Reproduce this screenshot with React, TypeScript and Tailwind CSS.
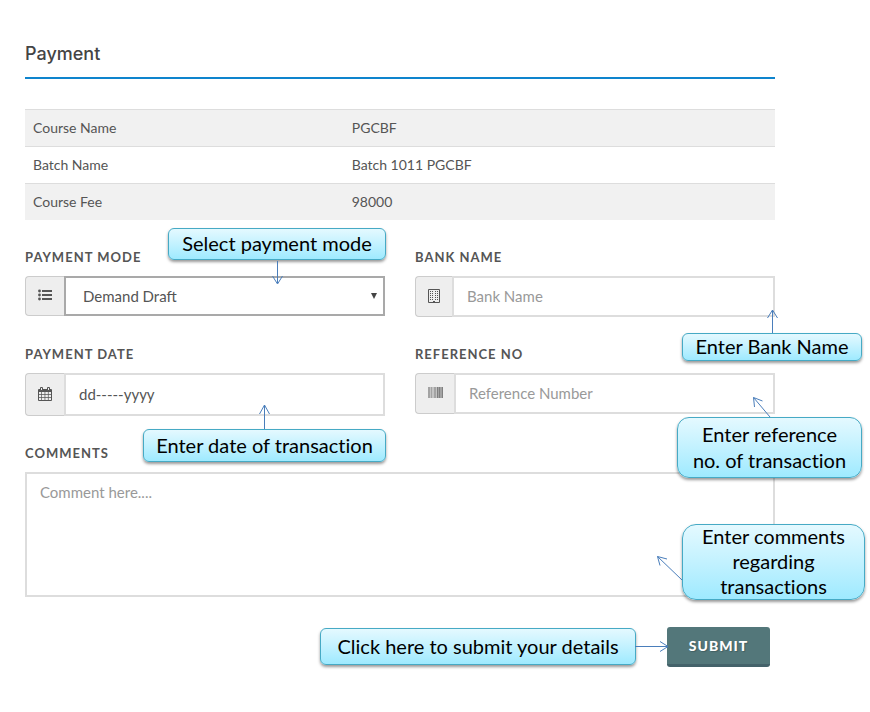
import type { ReactNode } from "react";

const courseRows = [
  { name: "Course Name", value: "PGCBF" },
  { name: "Batch Name", value: "Batch 1011 PGCBF" },
  { name: "Course Fee", value: "98000" },
];

const labelClass =
  "mb-[9px] block w-fit text-[13px] leading-5 font-bold tracking-[1px] text-[#555] uppercase";

const inputClass =
  "w-full min-w-0 flex-1 border-2 border-[#ddd] bg-white px-[13px] text-[15px] text-[#555] outline-none placeholder:text-[#999]";

function ListIcon() {
  return (
    <svg width="14" height="12" viewBox="0 0 14 12" fill="#555" aria-hidden="true">
      <circle cx="1.5" cy="2" r="1.4" />
      <circle cx="1.5" cy="6" r="1.4" />
      <circle cx="1.5" cy="10" r="1.4" />
      <rect x="4" y="1" width="10" height="2" />
      <rect x="4" y="5" width="10" height="2" />
      <rect x="4" y="9" width="10" height="2" />
    </svg>
  );
}

function BuildingIcon() {
  const rows = [2, 4, 6, 8, 10];
  const columns = [2, 4, 7, 9];
  return (
    <svg width="12" height="14" viewBox="0 0 12 14" fill="#555" aria-hidden="true">
      <path d="M0.5 0.5h11v13h-11z" fill="none" stroke="#555" />
      {rows.map((y) =>
        columns.map((x) => <rect key={`${x}-${y}`} x={x} y={y} width="1" height="1" />)
      )}
      <rect x="5" y="12" width="2" height="2" />
    </svg>
  );
}

function CalendarIcon() {
  return (
    <svg width="14" height="14" viewBox="0 0 14 14" aria-hidden="true">
      <path d="M1 2h12a1 1 0 0 1 1 1v10a1 1 0 0 1-1 1H1a1 1 0 0 1-1-1V3a1 1 0 0 1 1-1z" fill="#555" />
      <path d="M1 5h2.3v2.2H1zM4 5h2.6v2.2H4zM7.3 5h2.6v2.2H7.3zM10.6 5H13v2.2h-2.4zM1 8h2.3v2.2H1zM4 8h2.6v2.2H4zM7.3 8h2.6v2.2H7.3zM10.6 8H13v2.2h-2.4zM1 11h2.3v2H1zM4 11h2.6v2H4zM7.3 11h2.6v2H7.3zM10.6 11H13v2h-2.4z" fill="#eee" />
      <path d="M2.5 0.5h2v3h-2zM9.5 0.5h2v3h-2z" fill="#eee" stroke="#555" />
    </svg>
  );
}

function BarcodeIcon() {
  return (
    <svg width="15" height="11" viewBox="0 0 15 11" aria-hidden="true">
      <rect width="15" height="11" fill="#c4c4c4" />
      <path d="M0 0h2v11H0zM3 0h1v11H3zM6 0h2v11H6zM9 0h5v11H9z" fill="#a3a3a3" />
      <path d="M9 0h1v11H9zM11 0h1v11h-1zM14 0h1v11h-1z" fill="#808080" />
    </svg>
  );
}

function AddOn({ children, narrow = false }: { children: ReactNode; narrow?: boolean }) {
  return (
    <span
      className={`flex shrink-0 items-center justify-center rounded-l border border-r-0 border-[#ccc] bg-[#eee] pb-0.5 ${
        narrow ? "w-[37px]" : "w-[39px]"
      }`}
    >
      {children}
    </span>
  );
}

function Callout({ className, children }: { className: string; children: ReactNode }) {
  return (
    <div
      className={`absolute z-10 flex items-center justify-center border border-[#46aac5] bg-linear-to-b from-[#e4f9ff] to-[#9eeaff] pb-0.5 text-center text-[20px] whitespace-nowrap text-black shadow-[0_2px_3px_rgba(0,0,0,0.4)] [font-variant-ligatures:none] ${className}`}
    >
      {children}
    </div>
  );
}

/* Thin connector between a callout and its control. */
function Arrow({ className, width, height, d }: { className: string; width: number; height: number; d: string }) {
  return (
    <svg
      className={`pointer-events-none absolute z-20 ${className}`}
      width={width}
      height={height}
      viewBox={`0 0 ${width} ${height}`}
      fill="none"
      stroke="#4a7ebb"
      aria-hidden="true"
    >
      <path d={d} />
    </svg>
  );
}

export default function App() {
  return (
    <main className="bg-white pt-10 pr-[95px] pb-[45px] pl-[25px] font-['Lato',sans-serif] text-[#555]">
      <h1 className="border-b-2 border-[#0e84cd] pb-[9px] font-['Inter',sans-serif] text-lg leading-7 font-medium text-[#444]">
        Payment
      </h1>

      <table className="mt-[30px] w-full border-collapse text-left text-sm leading-5">
        <tbody>
          {courseRows.map((row) => (
            <tr key={row.name} className="border-t border-[#ddd] odd:bg-[#f1f1f1]">
              <th scope="row" className="w-[42.5%] p-2 font-normal">
                {row.name}
              </th>
              <td className="p-2">{row.value}</td>
            </tr>
          ))}
        </tbody>
      </table>

      <form className="mt-[27px]" onSubmit={(event) => event.preventDefault()}>
        <div className="grid grid-cols-2 gap-x-[30px] gap-y-[27px]">
          <div className="relative">
            <label htmlFor="mode" className={labelClass}>
              Payment Mode
            </label>
            <div className="relative flex h-10">
              <AddOn>
                <ListIcon />
              </AddOn>
              <select
                id="mode"
                className="w-full min-w-0 flex-1 appearance-none border-2 border-[#a9a9a9] bg-white px-[17px] text-[15px] text-[#555] outline-none"
              >
                <option>Demand Draft</option>
              </select>
              <svg
                className="pointer-events-none absolute top-[17px] right-2"
                width="6"
                height="6"
                viewBox="0 0 6 6"
                fill="#444"
                aria-hidden="true"
              >
                <path d="M0 0h6L3 6z" />
              </svg>
            </div>
            <Callout className="-top-[19px] right-[-1px] h-8 w-[218px] rounded-md">Select payment mode</Callout>
            <Arrow className="top-[14px] right-[102px]" width={11} height={24} d="M5.5 0V22M0.5 15L5.5 23L10.5 15" />
          </div>

          <div className="relative">
            <label htmlFor="bank" className={labelClass}>
              Bank Name
            </label>
            <div className="flex h-[41px]">
              <AddOn narrow>
                <BuildingIcon />
              </AddOn>
              <input id="bank" type="text" placeholder="Bank Name" className={inputClass} />
            </div>
            <Callout className="top-[86px] right-[-87px] h-7 w-[180px] rounded-md">Enter Bank Name</Callout>
            <Arrow className="top-[62px] right-[-3px]" width={11} height={24} d="M5.5 24V1M0.5 9L5.5 1L10.5 9" />
          </div>

          <div className="relative">
            <label htmlFor="date" className={labelClass}>
              Payment Date
            </label>
            <div className="flex h-[43px]">
              <AddOn>
                <CalendarIcon />
              </AddOn>
              <input id="date" type="text" defaultValue="dd-----yyyy" className={inputClass} />
            </div>
            <Callout className="top-[85px] right-[-1px] h-[33px] w-[243px] rounded-md">
              Enter date of transaction
            </Callout>
            <Arrow className="top-[60px] right-[115px]" width={11} height={25} d="M5.5 25V1M0.5 10L5.5 1L10.5 10" />
          </div>

          <div className="relative">
            <label htmlFor="reference" className={labelClass}>
              Reference No
            </label>
            <div className="flex h-[41px]">
              <AddOn>
                <BarcodeIcon />
              </AddOn>
              <input id="reference" type="text" placeholder="Reference Number" className={inputClass} />
            </div>
            <Callout className="top-[73px] right-[-87px] h-[61px] w-[185px] rounded-xl leading-[26px]">
              Enter reference
              <br />
              no. of transaction
            </Callout>
            <Arrow className="top-[52px] right-[4px]" width={19} height={22} d="M18 21L1.5 1.5M2.5 11L1.5 1.5L10.5 5" />
          </div>
        </div>

        <div className="relative mt-[27px]">
          <label htmlFor="comments" className={labelClass}>
            Comments
          </label>
          <textarea
            id="comments"
            placeholder="Comment here...."
            className="block h-[125px] w-full resize-none border-2 border-[#ddd] bg-white px-[13px] py-[7px] text-[15px] leading-[22px] text-[#555] outline-none placeholder:text-[#999]"
          />
          <Callout className="top-[81px] right-[-90px] h-[76px] w-[183px] rounded-[14px] leading-[25px]">
            Enter comments
            <br />
            regarding
            <br />
            transactions
          </Callout>
          <Arrow className="top-[112px] right-[92px]" width={27} height={26} d="M26 25L1.5 1.5M4 10.5L1.5 1.5L11 4" />
        </div>

        <div className="mt-[30px] flex justify-end pr-[5px]">
          <div className="relative">
            <button
              type="submit"
              className="block h-10 w-[103px] rounded-[3px] border-b-[3px] border-[#44626a] bg-[#53777a] text-sm font-black tracking-[1px] text-white uppercase [text-shadow:1px_1px_1px_rgba(0,0,0,0.2)]"
            >
              Submit
            </button>
            <Callout className="top-px right-[134px] h-[37px] w-[316px] rounded-md">
              Click here to submit your details
            </Callout>
            <Arrow className="top-[14px] right-[101px]" width={34} height={11} d="M0 5.5H33M25 0.5L33 5.5L25 10.5" />
          </div>
        </div>
      </form>
    </main>
  );
}
